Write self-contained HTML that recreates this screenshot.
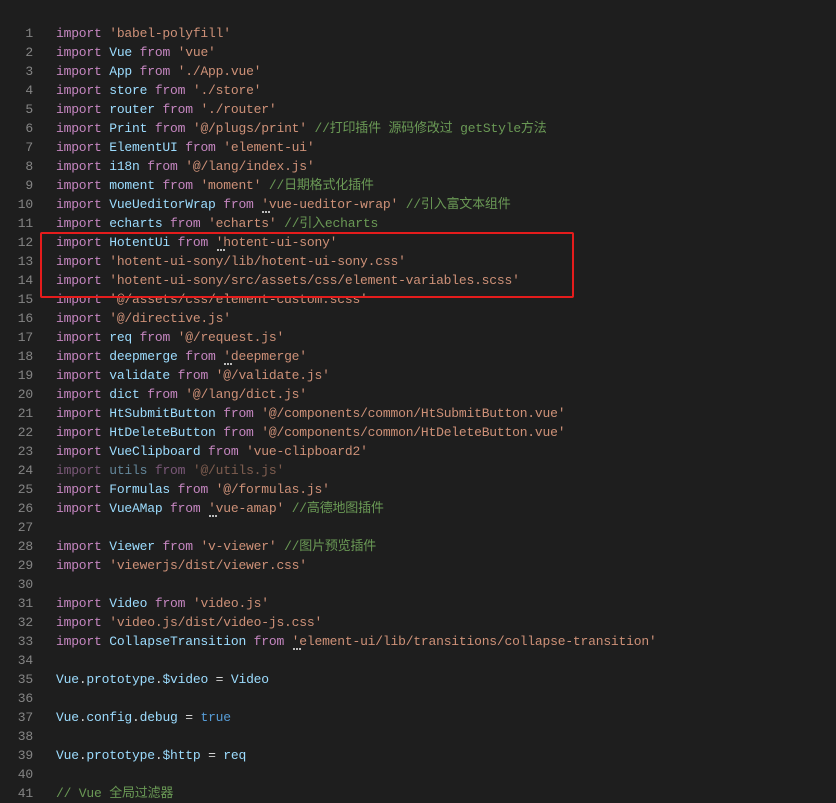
<!DOCTYPE html>
<html><head><meta charset="utf-8"><style>
html,body{margin:0;padding:0;background:#1e1e1e;width:836px;height:802px;overflow:hidden}
.c{position:absolute;top:24px;left:0;font-family:"Liberation Mono","Noto Sans CJK SC",monospace;font-size:13px;letter-spacing:-0.2px;line-height:19px;color:#d4d4d4}
.l{height:19px;position:relative;white-space:pre;overflow:visible}
.n{display:inline-block;width:33px;text-align:right;color:#858585;margin-right:23px}
.k{color:#c586c0}.v{color:#9cdcfe}.s{color:#ce9178}.m{color:#6a9955}.b{color:#569cd6}
.d{opacity:.55}
.q{position:relative}
.q:after{content:"";position:absolute;left:1px;top:14px;width:8px;border-bottom:2px dotted #bbb}
.box{position:absolute;left:40px;top:232px;width:530px;height:62px;border:2px solid #e51c1c;border-radius:2px}
</style></head><body>
<div class="c"><div class="l"><span class="n">1</span><span class="k">import</span> <span class="s">'babel-polyfill'</span></div><div class="l"><span class="n">2</span><span class="k">import</span> <span class="v">Vue</span> <span class="k">from</span> <span class="s">'vue'</span></div><div class="l"><span class="n">3</span><span class="k">import</span> <span class="v">App</span> <span class="k">from</span> <span class="s">'./App.vue'</span></div><div class="l"><span class="n">4</span><span class="k">import</span> <span class="v">store</span> <span class="k">from</span> <span class="s">'./store'</span></div><div class="l"><span class="n">5</span><span class="k">import</span> <span class="v">router</span> <span class="k">from</span> <span class="s">'./router'</span></div><div class="l"><span class="n">6</span><span class="k">import</span> <span class="v">Print</span> <span class="k">from</span> <span class="s">'@/plugs/print'</span> <span class="m">//打印插件 源码修改过 getStyle方法</span></div><div class="l"><span class="n">7</span><span class="k">import</span> <span class="v">ElementUI</span> <span class="k">from</span> <span class="s">'element-ui'</span></div><div class="l"><span class="n">8</span><span class="k">import</span> <span class="v">i18n</span> <span class="k">from</span> <span class="s">'@/lang/index.js'</span></div><div class="l"><span class="n">9</span><span class="k">import</span> <span class="v">moment</span> <span class="k">from</span> <span class="s">'moment'</span> <span class="m">//日期格式化插件</span></div><div class="l"><span class="n">10</span><span class="k">import</span> <span class="v">VueUeditorWrap</span> <span class="k">from</span> <span class="s q">'vue-ueditor-wrap'</span> <span class="m">//引入富文本组件</span></div><div class="l"><span class="n">11</span><span class="k">import</span> <span class="v">echarts</span> <span class="k">from</span> <span class="s">'echarts'</span> <span class="m">//引入echarts</span></div><div class="l"><span class="n">12</span><span class="k">import</span> <span class="v">HotentUi</span> <span class="k">from</span> <span class="s q">'hotent-ui-sony'</span></div><div class="l"><span class="n">13</span><span class="k">import</span> <span class="s">'hotent-ui-sony/lib/hotent-ui-sony.css'</span></div><div class="l"><span class="n">14</span><span class="k">import</span> <span class="s">'hotent-ui-sony/src/assets/css/element-variables.scss'</span></div><div class="l"><span class="n">15</span><span class="k">import</span> <span class="s">'@/assets/css/element-custom.scss'</span></div><div class="l"><span class="n">16</span><span class="k">import</span> <span class="s">'@/directive.js'</span></div><div class="l"><span class="n">17</span><span class="k">import</span> <span class="v">req</span> <span class="k">from</span> <span class="s">'@/request.js'</span></div><div class="l"><span class="n">18</span><span class="k">import</span> <span class="v">deepmerge</span> <span class="k">from</span> <span class="s q">'deepmerge'</span></div><div class="l"><span class="n">19</span><span class="k">import</span> <span class="v">validate</span> <span class="k">from</span> <span class="s">'@/validate.js'</span></div><div class="l"><span class="n">20</span><span class="k">import</span> <span class="v">dict</span> <span class="k">from</span> <span class="s">'@/lang/dict.js'</span></div><div class="l"><span class="n">21</span><span class="k">import</span> <span class="v">HtSubmitButton</span> <span class="k">from</span> <span class="s">'@/components/common/HtSubmitButton.vue'</span></div><div class="l"><span class="n">22</span><span class="k">import</span> <span class="v">HtDeleteButton</span> <span class="k">from</span> <span class="s">'@/components/common/HtDeleteButton.vue'</span></div><div class="l"><span class="n">23</span><span class="k">import</span> <span class="v">VueClipboard</span> <span class="k">from</span> <span class="s">'vue-clipboard2'</span></div><div class="l"><span class="n">24</span><span class="d"><span class="k">import</span> <span class="v">utils</span> <span class="k">from</span> <span class="s">'@/utils.js'</span></span></div><div class="l"><span class="n">25</span><span class="k">import</span> <span class="v">Formulas</span> <span class="k">from</span> <span class="s">'@/formulas.js'</span></div><div class="l"><span class="n">26</span><span class="k">import</span> <span class="v">VueAMap</span> <span class="k">from</span> <span class="s q">'vue-amap'</span> <span class="m">//高德地图插件</span></div><div class="l"><span class="n">27</span></div><div class="l"><span class="n">28</span><span class="k">import</span> <span class="v">Viewer</span> <span class="k">from</span> <span class="s">'v-viewer'</span> <span class="m">//图片预览插件</span></div><div class="l"><span class="n">29</span><span class="k">import</span> <span class="s">'viewerjs/dist/viewer.css'</span></div><div class="l"><span class="n">30</span></div><div class="l"><span class="n">31</span><span class="k">import</span> <span class="v">Video</span> <span class="k">from</span> <span class="s">'video.js'</span></div><div class="l"><span class="n">32</span><span class="k">import</span> <span class="s">'video.js/dist/video-js.css'</span></div><div class="l"><span class="n">33</span><span class="k">import</span> <span class="v">CollapseTransition</span> <span class="k">from</span> <span class="s q">'element-ui/lib/transitions/collapse-transition'</span></div><div class="l"><span class="n">34</span></div><div class="l"><span class="n">35</span><span class="v">Vue</span>.<span class="v">prototype</span>.<span class="v">$video</span> = <span class="v">Video</span></div><div class="l"><span class="n">36</span></div><div class="l"><span class="n">37</span><span class="v">Vue</span>.<span class="v">config</span>.<span class="v">debug</span> = <span class="b">true</span></div><div class="l"><span class="n">38</span></div><div class="l"><span class="n">39</span><span class="v">Vue</span>.<span class="v">prototype</span>.<span class="v">$http</span> = <span class="v">req</span></div><div class="l"><span class="n">40</span></div><div class="l"><span class="n">41</span><span class="m">// Vue 全局过滤器</span></div></div>
<div class="box"></div>
</body></html>
